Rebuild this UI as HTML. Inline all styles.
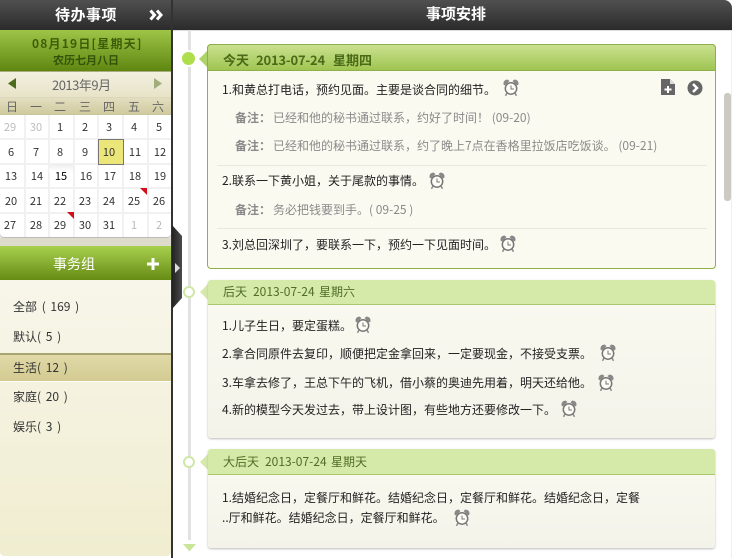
<!DOCTYPE html>
<html lang="zh"><head><meta charset="utf-8">
<style>
*{margin:0;padding:0;box-sizing:border-box}
html,body{width:732px;height:558px;overflow:hidden;background:#fff}
body{position:relative;font:12px/16px "WenQuanYi Zen Hei Mono","WenQuanYi Zen Hei","Noto Sans CJK SC",monospace;color:#222}
.a{position:absolute}
.t{position:absolute;white-space:pre;line-height:16px;height:16px}
.g{color:#8a8a8a}.b{font-weight:bold}
.g i{font-style:normal;margin-left:2px}
.c{position:absolute;width:24px;height:16px;text-align:center;line-height:16px;color:#333;font-size:11px}
.w{position:absolute;width:24px;height:16px;text-align:center;line-height:16px;color:#666}
.n{color:#bbb}
.l{word-spacing:2px;color:#333;left:13px}
.vl{position:absolute;top:115px;width:2px;height:122px;background:#f1f1f1}
.hl{position:absolute;left:0;width:171px;height:2px;background:#f1f1f1}
.card{position:absolute;background:linear-gradient(#fbfaf1,#f3f3ea)}
.head{position:absolute;left:0;right:0;top:0;background:#d5e9a8;border-bottom:1px solid #a9c86e;border-radius:3px 3px 0 0}
.sep{position:absolute;left:217px;width:490px;height:1px;background:#e8e8e0}
svg.i{position:absolute;width:16px;height:17px}
.h1{color:#4a6a18;font-weight:bold;font-size:13px}
.h2{color:#4f6d25}
</style></head><body>
<svg width="0" height="0" style="position:absolute"><defs><symbol id="al" viewBox="0 0 16 17"><path d="M0.500 5.500 Q0 1 4.500 0.500 L6.500 2 L2 6.500Z M15.500 5.500 Q16 1 11.500 0.500 L9.500 2 L14 6.500Z" fill="#888"/><circle cx="8" cy="9.500" r="5.700" fill="#fdfdf6" stroke="#777" stroke-width="1.500"/><path d="M8 6.500V10H11" fill="none" stroke="#777"/><path d="M4 14 L2.500 16.800 M12 14 L13.500 16.800" stroke="#888" stroke-width="1.500"/></symbol></defs></svg>

<!-- left panel -->
<div class="a" style="left:0;top:0;width:171px;height:30px;background:linear-gradient(#505050,#2b2b2b)"></div>
<div class="t b" style="left:55px;top:7px;font-size:15px;letter-spacing:.5px;color:#fff">待办事项</div>
<svg class="a" style="left:149px;top:9px" width="14" height="12"><path d="M1.500 1.500 L5.500 6 L1.500 10.500 M8 1.500 L12 6 L8 10.500" fill="none" stroke="#fff" stroke-width="3"/></svg>
<div class="a" style="left:0;top:30px;width:171px;height:41px;background:linear-gradient(#9ec547,#5f8610)"></div>
<div class="t b" style="left:32px;top:36px;color:#3c5c08;letter-spacing:1.2px">08月19日[星期天]</div>
<div class="t b" style="left:53px;top:52px;font-size:11px;color:#35520a">农历七月八日</div>
<div class="a" style="left:0;top:71px;width:171px;height:26px;border-top:1px solid #a9ad80;background:linear-gradient(#f3f0e0,#e7e3c8)"></div>
<svg class="a" style="left:8px;top:78px" width="9" height="11"><path d="M8 0V11L0 5.500Z" fill="#4c6b1c"/></svg>
<svg class="a" style="left:154px;top:78px" width="9" height="11"><path d="M0 0V11L8 5.500Z" fill="#a2ad7d"/></svg>
<div class="t" style="left:52px;top:77px;font-size:13px;letter-spacing:-.5px;color:#666">2013年9月</div>
<div class="a" style="left:0;top:97px;width:171px;height:18px;border-top:1px solid #dcd8bc;background:linear-gradient(#e2dec0,#cfc99c)"></div>
<div class="a" style="left:0;top:115px;width:171px;height:122px;background:#fff;border-radius:0 0 4px 4px;box-shadow:0 1px 2px #999"></div>
<div class="vl" style="left:24px"></div><div class="vl" style="left:48px"></div><div class="vl" style="left:73px"></div><div class="vl" style="left:97px"></div><div class="vl" style="left:122px"></div><div class="vl" style="left:147px"></div>
<div class="hl" style="top:138px"></div><div class="hl" style="top:163px"></div><div class="hl" style="top:187px"></div><div class="hl" style="top:212px"></div>
<div class="a" style="left:49px;top:164px;width:24px;height:8px;background:linear-gradient(#eee,#fff)"></div>
<div class="a" style="left:98px;top:139px;width:26px;height:26px;background:#ebe67a;border:1px solid #777"></div>

<div class="w" style="left:0;top:99px">日</div><div class="w" style="left:24px;top:99px">一</div><div class="w" style="left:48px;top:99px">二</div><div class="w" style="left:73px;top:99px">三</div><div class="w" style="left:97px;top:99px">四</div><div class="w" style="left:122px;top:99px">五</div><div class="w" style="left:146px;top:99px">六</div>

<div class="c n" style="left:-2px;top:119px">29</div><div class="c n" style="left:24px;top:119px">30</div><div class="c" style="left:48px;top:119px">1</div><div class="c" style="left:73px;top:119px">2</div><div class="c" style="left:97px;top:119px">3</div><div class="c" style="left:122px;top:119px">4</div><div class="c" style="left:147px;top:119px">5</div>
<div class="c" style="left:-1px;top:144px">6</div><div class="c" style="left:24px;top:144px">7</div><div class="c" style="left:48px;top:144px">8</div><div class="c" style="left:73px;top:144px">9</div><div class="c" style="left:97px;top:144px">10</div><div class="c" style="left:123px;top:144px">11</div><div class="c" style="left:148px;top:144px">12</div>
<div class="c" style="left:-1px;top:168px">13</div><div class="c" style="left:25px;top:168px">14</div><div class="c" style="left:49px;top:168px;color:#000">15</div><div class="c" style="left:74px;top:168px">16</div><div class="c" style="left:98px;top:168px">17</div><div class="c" style="left:123px;top:168px">18</div><div class="c" style="left:148px;top:168px">19</div>
<div class="c" style="left:-1px;top:193px">20</div><div class="c" style="left:24px;top:193px">21</div><div class="c" style="left:48px;top:193px">22</div><div class="c" style="left:73px;top:193px">23</div><div class="c" style="left:97px;top:193px">24</div><div class="c" style="left:122px;top:193px">25</div><div class="c" style="left:147px;top:193px">26</div>
<div class="c" style="left:-2px;top:217px">27</div><div class="c" style="left:24px;top:217px">28</div><div class="c" style="left:48px;top:217px">29</div><div class="c" style="left:73px;top:217px">30</div><div class="c" style="left:97px;top:217px">31</div><div class="c n" style="left:122px;top:217px">1</div><div class="c n" style="left:147px;top:217px">2</div>
<svg class="a" style="left:140px;top:188px" width="8" height="7"><path d="M0 0H7V7Z" fill="#d0101c"/></svg>
<svg class="a" style="left:67px;top:212px" width="7" height="7"><path d="M0 0H7V7Z" fill="#d0101c"/></svg>

<div class="a" style="left:0;top:238px;width:171px;height:8px;background:#dddccb"></div>
<div class="a" style="left:0;top:246px;width:171px;height:34px;background:linear-gradient(#a8d04e,#668c14)"></div>
<div class="t" style="left:53px;top:256px;font-size:14px;color:#fff">事务组</div>
<svg class="a" style="left:146px;top:257px" width="14" height="14"><path d="M7 1V13M1 7H13" stroke="#fff" stroke-width="3"/></svg>
<div class="a" style="left:0;top:280px;width:171px;height:276px;background:linear-gradient(#f8f6ea,#f0edd0);border-radius:0 0 4px 4px"></div>
<div class="a" style="left:0;top:353px;width:171px;height:29px;background:linear-gradient(#e0d9a8,#d3cb91);border-top:2px solid #a9a372;border-bottom:1px solid #fff"></div>
<div class="t l" style="top:299px">全部 ( 169 )</div>
<div class="t l" style="top:329px">默认( 5 )</div>
<div class="t l" style="top:360px">生活( 12 )</div>
<div class="t l" style="top:389px">家庭( 20 )</div>
<div class="t l" style="top:419px">娱乐( 3 )</div>

<!-- divider -->
<div class="a" style="left:171px;top:0;width:2px;height:558px;background:#333"></div>
<svg class="a" style="left:172px;top:225px" width="11" height="85"><defs><linearGradient id="hg" x1="0" x2="1" y1="0" y2="0"><stop offset="0" stop-color="#222"/><stop offset="1" stop-color="#4a4a4a"/></linearGradient></defs><path d="M0 0L10 11V73L0 84Z" fill="url(#hg)"/><path d="M3 38L8 43L3 48Z" fill="#ddd"/></svg>

<!-- top right header -->
<div class="a" style="left:173px;top:0;width:559px;height:31px;background:linear-gradient(#505050,#2b2b2b);border-radius:0 8px 0 0;border-bottom:1px solid #ddd"></div>
<div class="t b" style="left:426px;top:6px;font-size:15px;color:#fff">事项安排</div>

<!-- scrollbar -->
<div class="a" style="left:731px;top:31px;width:1px;height:527px;background:#efefef"></div>
<div class="a" style="left:724px;top:93px;width:7px;height:108px;background:#cdcac2;border-radius:3px"></div>

<!-- timeline -->
<div class="a" style="left:188px;top:30px;width:3px;height:510px;background:#e2e2e2"></div>
<div class="a" style="left:182px;top:52px;width:13px;height:13px;border-radius:50%;background:#aede4c;box-shadow:0 0 0 2px #fff"></div>
<div class="a" style="left:183px;top:286px;width:12px;height:12px;border-radius:50%;background:#fff;border:2px solid #cfe7a5"></div>
<div class="a" style="left:183px;top:456px;width:12px;height:12px;border-radius:50%;background:#fff;border:2px solid #cfe7a5"></div>
<svg class="a" style="left:183px;top:544px" width="13" height="8"><path d="M0 0H13L6.500 7.500Z" fill="#c9e59a"/></svg>

<!-- card 1 -->
<svg class="a" style="left:199px;top:51px" width="9" height="16"><path d="M8 0V16L0 8Z" fill="#aed36b"/></svg>
<div class="card" style="left:207px;top:44px;width:509px;height:225px;background:#fbfaf1;border:1px solid #8eb04a;border-radius:4px"></div>
<div class="a" style="left:207px;top:44px;width:509px;height:27px;background:linear-gradient(#cae18f,#9fc552);border:1px solid #8eb04a;border-radius:4px 4px 0 0"></div>
<div class="t h1" style="left:223px;top:52px">今天</div>
<div class="t h1" style="left:256px;top:52px;letter-spacing:-.2px">2013-07-24</div>
<div class="t h1" style="left:333px;top:52px">星期四</div>
<div class="t" style="left:222px;top:82px;color:#222">1.和黄总打电话，预约见面。主要是谈合同的细节。</div>
<svg class="i" style="left:503px;top:79px"><use href="#al"/></svg>
<svg class="a" style="left:661px;top:79px" width="15" height="16"><path d="M0 0H9L14 5V16H0Z" fill="#666"/><path d="M9 0L14 5H9Z" fill="#ddd"/><path d="M7 7V14M3.500 10.500H10.500" stroke="#fff" stroke-width="2"/></svg>
<svg class="a" style="left:687px;top:80px" width="16" height="16"><circle cx="8" cy="8" r="7.500" fill="#666"/><path d="M6 4L10 8L6 12" fill="none" stroke="#fff" stroke-width="2.500"/></svg>
<div class="t g" style="left:235px;top:110px"><b>备注：</b><i>已经和他的秘书通过联系，约好了时间！ (09-20)</i></div>
<div class="t g" style="left:235px;top:138px"><b>备注：</b><i>已经和他的秘书通过联系，约了晚上7点在香格里拉饭店吃饭谈。 (09-21)</i></div>
<div class="sep" style="top:165px"></div>
<div class="t" style="left:222px;top:173px;color:#222">2.联系一下黄小姐，关于尾款的事情。</div>
<svg class="i" style="left:429px;top:172px"><use href="#al"/></svg>
<div class="t g" style="left:235px;top:202px"><b>备注：</b><i>务必把钱要到手。( 09-25 )</i></div>
<div class="sep" style="top:228px"></div>
<div class="t" style="left:222px;top:237px;color:#222">3.刘总回深圳了，要联系一下，预约一下见面时间。</div>
<svg class="i" style="left:500px;top:235px"><use href="#al"/></svg>

<!-- card 2 -->
<svg class="a" style="left:200px;top:284px" width="8" height="16"><path d="M8 0V16L0 8Z" fill="#d5e9a8"/></svg>
<div class="card" style="left:208px;top:280px;width:507px;height:158px;border-radius:3px;box-shadow:0 1px 2px #bbb"><div class="head" style="height:25px"></div></div>
<div class="t h2" style="left:223px;top:284px">后天</div>
<div class="t h2" style="left:253px;top:284px">2013-07-24</div>
<div class="t h2" style="left:319px;top:284px">星期六</div>
<div class="t" style="left:222px;top:318px;color:#222">1.儿子生日，要定蛋糕。</div>
<svg class="i" style="left:355px;top:316px"><use href="#al"/></svg>
<div class="t" style="left:222px;top:346px;color:#222">2.拿合同原件去复印，顺便把定金拿回来，一定要现金，不接受支票。</div>
<svg class="i" style="left:600px;top:344px"><use href="#al"/></svg>
<div class="t" style="left:222px;top:375px;color:#222">3.车拿去修了，王总下午的飞机，借小蔡的奥迪先用着，明天还给他。</div>
<svg class="i" style="left:598px;top:374px"><use href="#al"/></svg>
<div class="t" style="left:222px;top:402px;color:#222">4.新的模型今天发过去，带上设计图，有些地方还要修改一下。</div>
<svg class="i" style="left:561px;top:400px"><use href="#al"/></svg>

<!-- card 3 -->
<svg class="a" style="left:200px;top:454px" width="8" height="16"><path d="M8 0V16L0 8Z" fill="#d5e9a8"/></svg>
<div class="card" style="left:208px;top:449px;width:507px;height:99px;border-radius:3px;box-shadow:0 1px 2px #bbb"><div class="head" style="height:26px"></div></div>
<div class="t h2" style="left:223px;top:454px">大后天</div>
<div class="t h2" style="left:265px;top:454px">2013-07-24</div>
<div class="t h2" style="left:331px;top:454px">星期天</div>
<div class="t" style="left:222px;top:490px;color:#222">1.结婚纪念日，定餐厅和鲜花。结婚纪念日，定餐厅和鲜花。结婚纪念日，定餐</div>
<div class="t" style="left:222px;top:510px;color:#222">..厅和鲜花。结婚纪念日，定餐厅和鲜花。</div>
<svg class="i" style="left:454px;top:509px"><use href="#al"/></svg>
</body></html>
